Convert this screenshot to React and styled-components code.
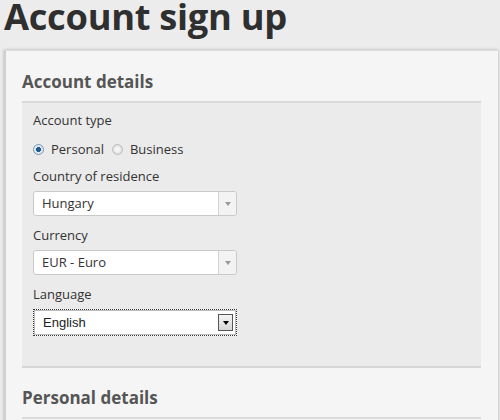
import React from "react";
import styled, { createGlobalStyle } from "styled-components";

const GlobalStyle = createGlobalStyle`
  html, body {
    margin: 0;
    padding: 0;
    background: #ececec;
    font-family: "Open Sans", sans-serif;
    color: #333;
    overflow: hidden;
  }
`;

const Page = styled.div`
  width: 500px;
  height: 420px;
  padding: 0 0 0 4px;
  box-sizing: border-box;
`;

const Title = styled.h1`
  margin: 0;
  font-size: 36.3px;
  line-height: 30px;
  font-weight: 700;
  color: #2f2f2f;
  letter-spacing: -0.3px;
  padding-top: 1px;
  height: 49px;
`;

const Card = styled.div`
  background: #f5f5f5;
  border-left: 2px solid #d0d0d0;
  border-top: 1px solid #dcdcdc;
  box-shadow: 0 0 3px rgba(0, 0, 0, 0.25);
  width: 494px;
  box-sizing: border-box;
  padding: 20px 17px 0 16px;
  height: 380px;
`;

const SectionTitle = styled.h2`
  margin: 0;
  font-size: 17px;
  font-weight: 700;
  color: #555;
  line-height: 22px;
  padding-bottom: 8px;
  border-bottom: 2px solid #dadada;
`;

const Panel = styled.div`
  background: #ebebeb;
  border-bottom: 2px solid #d6d6d6;
  padding: 7px 11px 30px;
  display: flex;
  flex-direction: column;
`;

const Label = styled.div`
  font-size: 13px;
  line-height: 20px;
  color: #333;
  margin-bottom: ${(p) => p.$gap || 5}px;
`;

const RadioRow = styled.div`
  display: flex;
  align-items: center;
  font-size: 13px;
  line-height: 20px;
  margin-bottom: 7px;
`;

const Radio = styled.span`
  width: 11px;
  height: 11px;
  border-radius: 50%;
  box-sizing: border-box;
  border: 1px solid ${(p) => (p.$checked ? "#7f95ab" : "#bdbdbd")};
  background: ${(p) =>
    p.$checked
      ? "radial-gradient(circle, #1d5a8f 0 2.2px, #dfe7ef 2.8px)"
      : "radial-gradient(circle, #f4f4f4 0 2px, #dcdcdc 4.5px)"};
  margin-right: 7px;
`;

const RadioText = styled.span`
  margin-right: 8px;
`;

const Select = styled.div`
  width: 204px;
  height: 25px;
  box-sizing: border-box;
  display: flex;
  background: #fff;
  border: 1px solid #c9c9c9;
  border-radius: 3px;
  margin-bottom: 9px;
`;

const SelectValue = styled.div`
  flex: 1;
  padding-left: 8px;
  font-size: 13px;
  line-height: 23px;
  color: #333;
`;

const Arrow = styled.div`
  width: 17px;
  border-left: 1px solid #d4d4d4;
  background: #f3f3f3;
  border-radius: 0 3px 3px 0;
  display: flex;
  align-items: center;
  justify-content: center;
  &::after {
    content: "";
    border-left: 3px solid transparent;
    border-right: 3px solid transparent;
    border-top: 4px solid #999;
  }
`;

const NativeSelect = styled.div`
  width: 204px;
  height: 27px;
  box-sizing: border-box;
  display: flex;
  align-items: center;
  background: #fff;
  border: 1px dotted #333;
  outline: 1px solid #bbb;
  outline-offset: -2px;
  padding: 0 3px 0 9px;
  font-family: "Liberation Sans", Arial, sans-serif;
  font-size: 13px;
  color: #222;
`;

const NativeValue = styled.span`
  flex: 1;
`;

const NativeArrow = styled.span`
  width: 15px;
  height: 17px;
  box-sizing: border-box;
  border: 1px solid #555;
  background: linear-gradient(#f4f4f4, #d6d6d6);
  display: flex;
  align-items: center;
  justify-content: center;
  &::after {
    content: "";
    border-left: 3.5px solid transparent;
    border-right: 3.5px solid transparent;
    border-top: 4px solid #000;
  }
`;

const Spacer = styled.div`
  height: 19px;
`;

const CustomSelect = ({ value }) => (
  <Select>
    <SelectValue>{value}</SelectValue>
    <Arrow />
  </Select>
);

export default function App() {
  return (
    <Page>
      <GlobalStyle />
      <Title>Account sign up</Title>
      <Card>
        <SectionTitle>Account details</SectionTitle>
        <Panel>
          <Label $gap={9}>Account type</Label>
          <RadioRow>
            <Radio $checked />
            <RadioText>Personal</RadioText>
            <Radio />
            <RadioText>Business</RadioText>
          </RadioRow>
          <Label>Country of residence</Label>
          <CustomSelect value="Hungary" />
          <Label>Currency</Label>
          <CustomSelect value="EUR - Euro" />
          <Label>Language</Label>
          <NativeSelect>
            <NativeValue>English</NativeValue>
            <NativeArrow />
          </NativeSelect>
        </Panel>
        <Spacer />
        <SectionTitle>Personal details</SectionTitle>
      </Card>
    </Page>
  );
}
